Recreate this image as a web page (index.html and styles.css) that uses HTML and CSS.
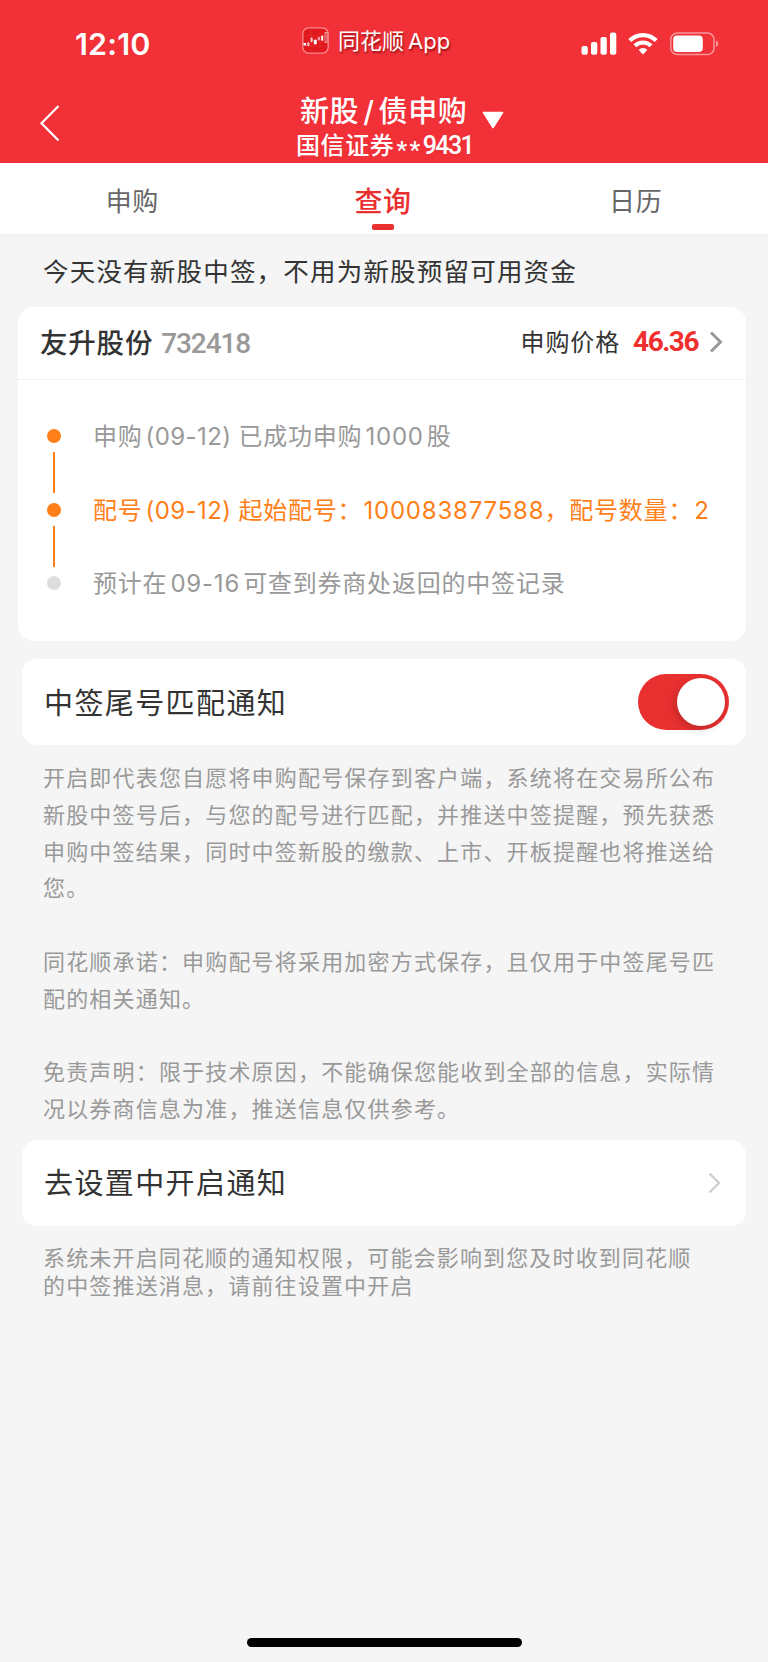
FILE: index.html
```html
<!DOCTYPE html>
<html lang="zh-CN">
<head>
    <meta charset="UTF-8">
    <meta name="viewport" content="width=device-width, initial-scale=1.0">
    <title>新股/债申购</title>
    <link rel="stylesheet" href="styles.css">
</head>
<body>
    <header class="header">
        <div class="status-bar">
            <div class="time">12:10</div>
            <div class="app-label">
                <svg class="app-icon" width="27" height="27" viewBox="0 0 27 27">
                    <rect x="0.8" y="0.8" width="25.4" height="25.4" rx="6" fill="#e0181e" stroke="#fa8a8c" stroke-width="1.3"/>
                    <path d="M1.5 9h24M1.5 19h24M9 1.5v24M18 1.5v24" stroke="#e8383a" stroke-width="0.5"/>
                    <path d="M1.5 16h2.6v2.6H1.500zM11.800 13h3v4h-3zM19.200 9h2v4.500h-2z" fill="#fff"/>
                    <path d="M5.600 16h1.500v2.500H5.600zM8.800 11.500h1.600v2.800H8.800zM16 10.500h1.500v2.500H16zM23 5.500h2v10h-2zM6.300 14.800v4.500M9.600 10.300v5M13.300 12v6M20.200 8v6.500" fill="none" stroke="#fff" stroke-width="0.6"/>
                </svg>
                <span>同花顺<span class="app-word">App</span></span>
            </div>
            <div class="status-icons">
                <svg width="36" height="24" viewBox="0 0 36 24" fill="#fff">
                    <rect x="0.5" y="14" width="6.3" height="8.7" rx="2"/>
                    <rect x="10" y="10" width="6.3" height="12.7" rx="2"/>
                    <rect x="19.5" y="5" width="6.3" height="17.7" rx="2"/>
                    <rect x="29" y="0.5" width="6.3" height="22.2" rx="2"/>
                </svg>
                <svg class="wifi" width="30" height="24" viewBox="0 0 30 24">
                    <path d="M1.8 8.500a18.800 18.800 0 0 1 26.400 0" fill="none" stroke="#fff" stroke-width="4.2"/>
                    <path d="M6.900 13.800a11.600 11.600 0 0 1 16.200 0" fill="none" stroke="#fff" stroke-width="4"/>
                    <path d="M15 22.400l-4.400-4.500a6.300 6.300 0 0 1 8.800 0z" fill="#fff"/>
                </svg>
                <svg width="49" height="24" viewBox="0 0 49 24">
                    <rect x="0.8" y="1" width="43.2" height="21.6" rx="6.5" fill="none" stroke="#fa9599" stroke-width="1.5"/>
                    <rect x="3.2" y="3.5" width="29.6" height="16.6" rx="4" fill="#fff"/>
                    <path d="M46 8.500c3 1 3 5.600 0 6.600z" fill="#fa9599"/>
                </svg>
            </div>
        </div>
        <div class="nav-bar">
            <svg class="back" width="22" height="38" viewBox="0 0 22 38">
                <path d="M19.500 2L2.500 19.300l17 17.200" fill="none" stroke="#fff" stroke-width="2.2"/>
            </svg>
            <div class="account">
                <h1 class="title">新股<span class="slash">/</span>债申购</h1>
                <p class="broker">国信证券<span class="stars">**</span><span class="broker-no">9431</span></p>
            </div>
            <svg class="drop" width="22" height="18" viewBox="0 0 22 18">
                <path d="M1.500 1.500h19L11 16.500z" fill="#fff" stroke="#fff" stroke-width="1.6" stroke-linejoin="round"/>
            </svg>
        </div>
    </header>

    <nav class="tabs">
        <div class="tab">申购</div>
        <div class="tab active">查询</div>
        <div class="tab">日历</div>
    </nav>

    <p class="notice">今天没有新股中签，不用为新股预留可用资金</p>

    <section class="stock-card">
        <div class="stock-head">
            <span class="stock-name">友升股份</span>
            <span class="stock-code">732418</span>
            <span class="price-label">申购价格</span>
            <span class="price">46.36</span>
            <svg width="14" height="22" viewBox="0 0 14 22">
                <path d="M2 1.500l9.500 9.500L2 20.500" fill="none" stroke="#999" stroke-width="3"/>
            </svg>
        </div>
        <ul class="steps">
            <li class="step">申购<span class="date">(09-12)</span>已成功申购<span class="num">1000</span>股</li>
            <li class="step current">配号<span class="date">(09-12)</span>起始配号：<span class="num long">100083877588</span>，配号数量：<span class="num last">2</span></li>
            <li class="step pending">预计在<span class="num">09-16</span>可查到券商处返回的中签记录</li>
        </ul>
    </section>

    <section class="row-card">
        <span class="row-title">中签尾号匹配通知</span>
        <div class="switch"></div>
    </section>

    <div class="terms">
        <p>开启即代表您自愿将申购配号保存到客户端，系统将在交易所公布新股中签号后，与您的配号进行匹配，并推送中签提醒，预先获悉申购中签结果，同时中签新股的缴款、上市、开板提醒也将推送给您。</p>
        <p>同花顺承诺：申购配号将采用加密方式保存，且仅用于中签尾号匹配的相关通知。</p>
        <p>免责声明：限于技术原因，不能确保您能收到全部的信息，实际情况以券商信息为准，推送信息仅供参考。</p>
    </div>

    <section class="row-card">
        <span class="row-title">去设置中开启通知</span>
        <svg class="arrow" width="14" height="22" viewBox="0 0 14 22">
            <path d="M1.500 1.500L11 11l-9.500 9.500" fill="none" stroke="#ccc" stroke-width="2.2"/>
        </svg>
    </section>

    <p class="hint">系统未开启同花顺的通知权限，可能会影响到您及时收到同花顺<br>的中签推送消息，请前往设置中开启</p>

    <div class="home-indicator"></div>
</body>
</html>
```
FILE: styles.css
```css
* {
    margin: 0;
    padding: 0;
    box-sizing: border-box;
}

body {
    display: flex;
    flex-direction: column;
    min-height: 1662px;
    background: #f5f5f5;
    color: #333;
    font-family: Inter, "Noto Sans CJK SC", sans-serif;
    overflow-x: hidden;
}

svg {
    display: block;
    flex: none;
}

/* Header */
.header {
    height: 163px;
    background: #f23037;
    color: #fff;
}

.status-bar {
    display: grid;
    grid-template-columns: 302px 1fr 187px;
    align-items: center;
    height: 87px;
}

.time {
    padding-left: 75px;
    font-size: 30.5px;
    font-weight: 600;
    line-height: 36px;
    letter-spacing: 0.2px;
}

.app-label {
    display: flex;
    align-items: center;
    gap: 9px;
    margin-top: -6px;
    font-size: 22px;
    line-height: 30px;
    text-shadow: 1px 2px 2px rgba(90, 0, 0, 0.6);
}

.app-word {
    margin-left: 4px;
}

.status-icons {
    display: flex;
    align-items: center;
}

.wifi {
    margin: 0 12px 0 11px;
}

.nav-bar {
    display: flex;
    height: 76px;
    padding-left: 39px;
}

.back {
    margin-top: 17px;
}

.account {
    width: 180px;
    margin-left: 235px;
}

.title {
    padding-left: 4px;
    font-size: 29px;
    font-weight: 500;
    line-height: 32px;
    margin-top: 9px;
    letter-spacing: 0.6px;
    white-space: nowrap;
}

.slash {
    margin: 0 4px;
}

.broker {
    font-size: 24px;
    font-weight: 500;
    line-height: 32px;
    margin-top: 2px;
    letter-spacing: 0.6px;
    white-space: nowrap;
}

.stars,
.broker-no {
    font-family: Roboto, sans-serif;
}

.stars {
    margin-left: 2px;
    line-height: 0;
    vertical-align: -4px;
    letter-spacing: 2.5px;
}

.broker-no {
    font-size: 25px;
    letter-spacing: -1.6px;
}

.drop {
    margin: 24px 0 0 6px;
}

/* Tabs */
.tabs {
    display: flex;
    height: 72px;
    padding: 0 7px;
    background: #fff;
    border-bottom: 1px solid #eee;
}

.tab {
    display: flex;
    flex-direction: column;
    align-items: center;
    flex: 1;
    padding-top: 19px;
    color: #666;
    font-size: 26px;
    line-height: 40px;
    letter-spacing: 0.6px;
}

.tab.active {
    padding-right: 2px;
    color: #e93030;
    font-size: 28px;
    font-weight: 500;
}

.tab.active::after {
    content: "";
    width: 22px;
    height: 6px;
    margin-top: 2px;
    background: #e93030;
    border-radius: 2px;
}

.notice {
    padding: 17px 43px 15px;
    font-size: 25.5px;
    line-height: 40px;
    letter-spacing: 1.2px;
}

/* Stock card */
.stock-card {
    height: 334px;
    margin: 0 22px 18px 18px;
    background: #fff;
    border-radius: 16px;
}

.stock-head {
    display: flex;
    align-items: center;
    height: 73px;
    padding: 0 23px 3px 22px;
    border-bottom: 1px solid #f1f1f1;
}

.stock-name {
    margin-top: -1px;
    font-size: 27.5px;
    font-weight: 500;
    letter-spacing: 0.8px;
}

.stock-code {
    margin: 3px 0 0 8px;
    color: #999;
    font-family: Roboto, sans-serif;
    font-size: 28px;
    font-weight: 500;
    letter-spacing: -1.1px;
}

.price-label {
    margin: -2px 0 0 auto;
    font-size: 24px;
    letter-spacing: 0.9px;
}

.price {
    margin: 0 11px 0 13px;
    color: #f0302f;
    font-family: Roboto, sans-serif;
    font-size: 28px;
    font-weight: 700;
    letter-spacing: -1.5px;
}

.steps {
    padding: 39px 0 0 29px;
    list-style: none;
}

.step {
    position: relative;
    height: 73.6px;
    padding-left: 46px;
    color: #999;
    font-size: 24px;
    line-height: 36px;
    letter-spacing: 0.8px;
    white-space: nowrap;
}

.step::before {
    content: "";
    position: absolute;
    top: 10px;
    left: 0;
    width: 14px;
    height: 14px;
    border-radius: 50%;
    background: #ff8019;
}

.step:not(:last-child)::after {
    content: "";
    position: absolute;
    top: 33px;
    left: 6px;
    width: 2px;
    height: 41px;
    background: #ff8019;
}

.step.current {
    color: #ff8019;
}

.step.pending::before {
    background: #ddd;
}

.date {
    margin: 0 7px 0 3px;
    letter-spacing: 0.4px;
}

.num {
    margin: 0 3px;
    letter-spacing: 0.8px;
}

.num.long,
.num.last {
    margin: 0 0 0 1px;
}

/* Setting rows */
.row-card {
    display: flex;
    align-items: center;
    justify-content: space-between;
    height: 86px;
    margin: 0 22px;
    padding: 0 17px 0 22px;
    background: #fff;
    border-radius: 15px;
}

.row-title {
    margin-top: -3px;
    font-size: 29px;
    letter-spacing: 1.4px;
}

.switch {
    width: 91px;
    height: 56px;
    padding: 4px;
    background: #e93030;
    border-radius: 28px;
}

.switch::after {
    content: "";
    display: block;
    width: 48px;
    height: 48px;
    margin-left: auto;
    background: #fff;
    border-radius: 50%;
    box-shadow: -2px 3px 8px rgba(0, 0, 0, 0.18);
}

.arrow {
    margin-right: 7px;
}

.terms {
    padding: 15px 46px 12px 43px;
    color: #999;
    font-size: 22px;
    line-height: 36.8px;
    letter-spacing: 1.18px;
}

.terms p + p {
    margin-top: 36.8px;
}

.hint {
    padding: 19px 43px 0;
    color: #999;
    font-size: 22px;
    line-height: 27.8px;
    letter-spacing: 1.16px;
}

.home-indicator {
    width: 275px;
    height: 9px;
    margin: auto auto 15px;
    background: #000;
    border-radius: 5px;
}
```
